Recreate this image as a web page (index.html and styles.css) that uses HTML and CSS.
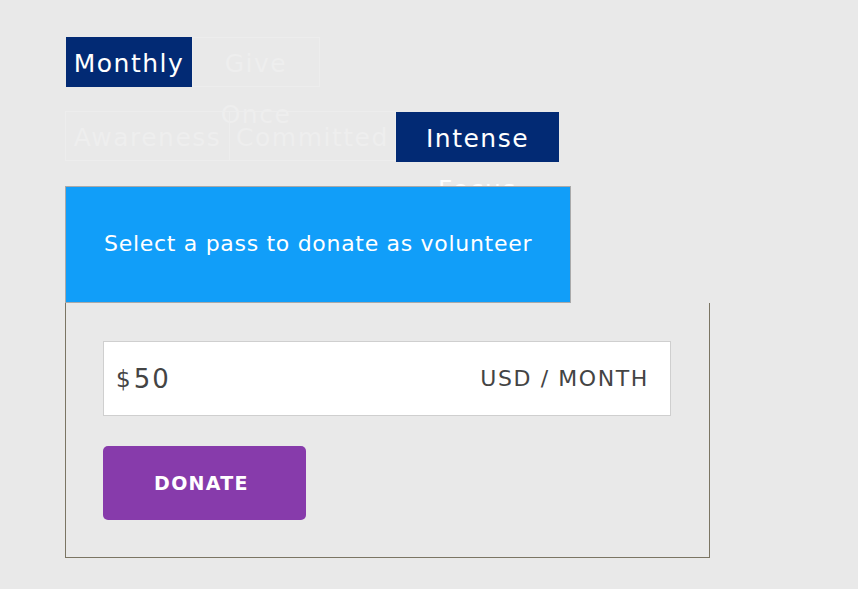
FILE: index.html
```html
<!DOCTYPE html>
<html>
<head>
<meta charset="utf-8">
<link rel="stylesheet" href="styles.css">
</head>
<body>
<div class="page">
  <div class="tabs tabs-freq">
    <div class="tab tab-active tab-monthly">Monthly</div>
    <div class="tab tab-give">Give Once</div>
  </div>
  <div class="tabs tabs-level">
    <div class="tab tab-awareness">Awareness</div>
    <div class="tab tab-committed">Committed</div>
    <div class="tab tab-active tab-intense">Intense Focus</div>
  </div>
  <div class="header">Select a pass to donate as volunteer</div>
  <div class="card">
    <div class="amount">
      <span class="currency">$</span><span class="value">50</span>
      <span class="unit">USD / MONTH</span>
    </div>
    <button class="donate">DONATE</button>
  </div>
</div>
</body>
</html>
```
FILE: styles.css
```css
html, body {
  margin: 0;
  padding: 0;
  background: #e9e9e9;
}
body {
  font-family: "DejaVu Sans", "Open Sans", sans-serif;
}
.page {
  padding: 37px 0 0 65px;
}
.tabs {
  display: flex;
}
.tab {
  box-sizing: border-box;
  height: 50px;
  line-height: 51px;
  font-size: 25px;
  letter-spacing: 1.5px;
  text-align: center;
  color: #eeeeee;
  border: 1px solid #ededed;
}
.tab-active {
  background: #022a74;
  color: #ffffff;
  border-color: #022a74;
}
.tab-monthly { width: 126px; margin-left: 1px; }
.tab-give { width: 128px; }
.tabs-level { margin-top: 24px; }
.tab-awareness { width: 164px; border-right: none; }
.tab-committed { width: 167px; border-left: 1px solid #ededed; }
.tab-intense { width: 163px; margin-top: 1px; }
.header {
  position: relative;
  box-sizing: border-box;
  width: 506px;
  height: 117px;
  margin-top: 24px;
  background: #119ef9;
  border: 1px solid #a9a9a9;
  color: #ffffff;
  font-size: 22px;
  letter-spacing: 0.7px;
  line-height: 113px;
  padding-left: 38px;
}
.card {
  box-sizing: border-box;
  width: 645px;
  border: 1px solid #7b7563;
  border-top: none;
  padding: 38px 38px 37px 37px;
}
.amount {
  box-sizing: border-box;
  width: 568px;
  height: 75px;
  background: #ffffff;
  border: 1px solid #cfcfcf;
  display: flex;
  align-items: center;
  padding: 0 21px 0 12px;
  color: #444444;
}
.currency {
  font-size: 23px;
  margin-right: 3px;
}
.value {
  font-size: 26px;
  letter-spacing: 2px;
}
.unit {
  margin-left: auto;
  font-size: 22px;
  letter-spacing: 1.6px;
}
.donate {
  display: block;
  margin-top: 30px;
  width: 203px;
  height: 74px;
  border: none;
  border-radius: 5px;
  background: #873bab;
  color: #ffffff;
  font-family: "DejaVu Sans", "Open Sans", sans-serif;
  font-weight: 700;
  font-size: 19px;
  letter-spacing: 1.3px;
  padding: 0 6px 0 0;
}
```
